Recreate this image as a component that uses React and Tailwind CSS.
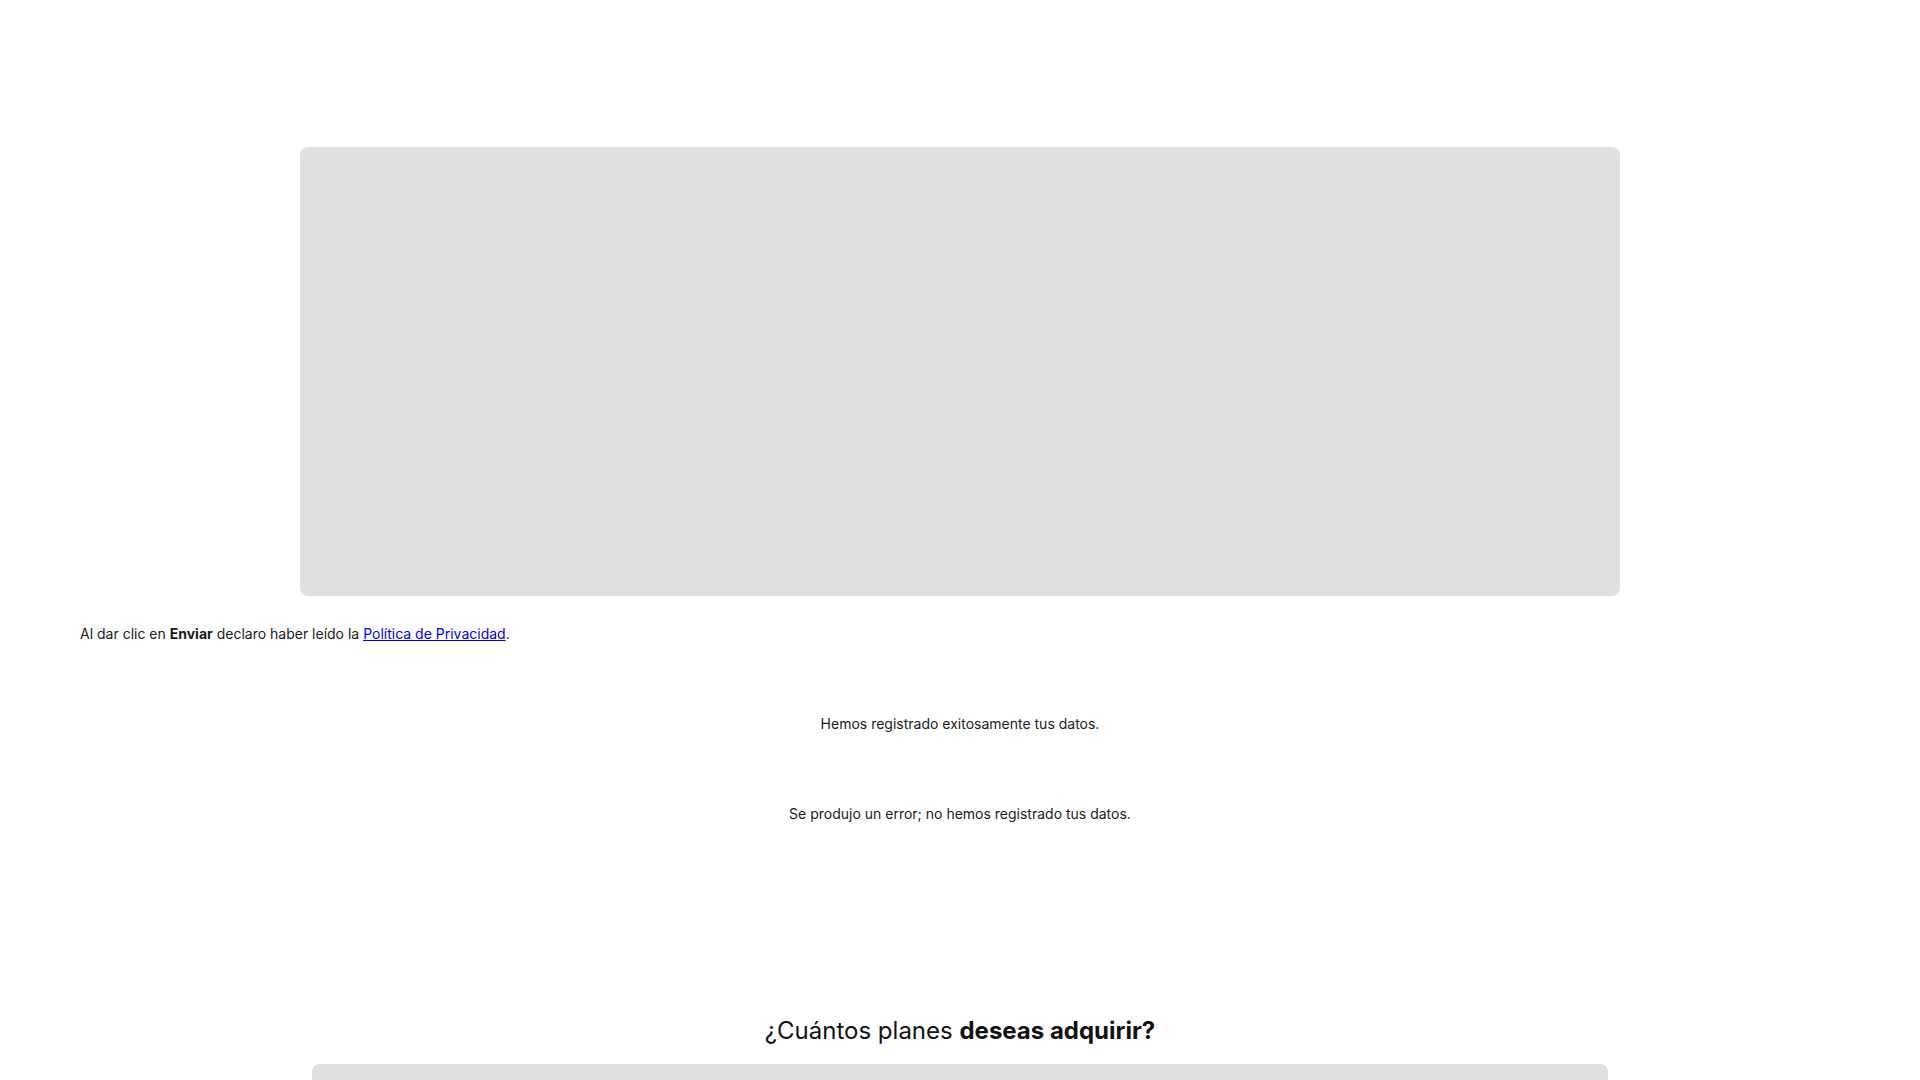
import React from "react";

const FormPlaceholder = () => (
  <div className="mx-auto w-[1320px] h-[449px] rounded-lg bg-[#e0e0e0]" />
);

const StatusMessage = ({ children }) => (
  <p className="text-center text-sm leading-5 text-[#1a1a1a]">{children}</p>
);

export default function App() {
  return (
    <div className="min-h-screen bg-white font-['Inter',sans-serif] text-[#1a1a1a]">
      <section className="pt-[147px]">
        <FormPlaceholder />

        <p className="mt-[28px] pl-[80px] text-sm leading-5">
          Al dar clic en <strong className="font-bold">Enviar</strong> declaro haber leído la{" "}
          <a href="#" className="text-[#0000ee] underline">
            Política de Privacidad
          </a>
          .
        </p>

        <div className="mt-[70px] flex flex-col gap-[70px]">
          <StatusMessage>Hemos registrado exitosamente tus datos.</StatusMessage>
          <StatusMessage>Se produjo un error; no hemos registrado tus datos.</StatusMessage>
        </div>
      </section>

      <section className="mt-[191px] flex flex-col items-center">
        <h2 className="text-2xl leading-8 text-[#111]">
          ¿Cuántos planes <span className="font-bold">deseas adquirir?</span>
        </h2>
        <div className="mt-[17px] w-[1296px] h-[300px] rounded-lg bg-[#e0e0e0]" />
      </section>
    </div>
  );
}
